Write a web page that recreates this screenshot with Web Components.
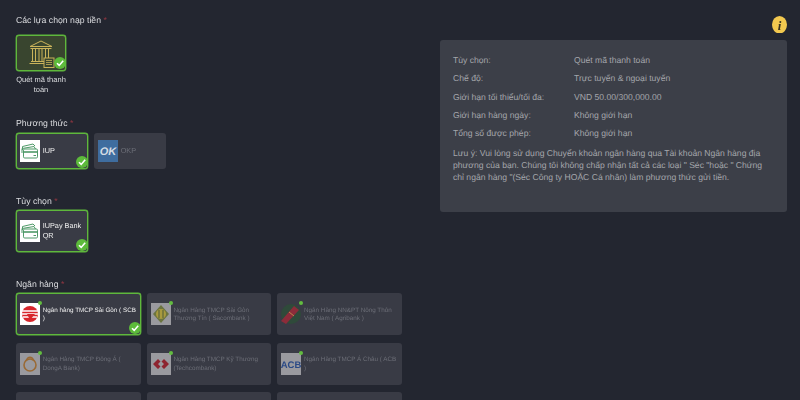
<!DOCTYPE html>
<html lang="vi">
<head>
<meta charset="utf-8">
<style>
  html, body { margin: 0; height: 100%; overflow: hidden; background: #232630; }
  body { font-family: "Liberation Sans", Arial, sans-serif; color: #d6d7da; text-rendering: geometricPrecision; }
</style>
</head>
<body>
<script>
const CHECK = `<svg class="check" viewBox="0 0 12 12" width="12" height="12"><circle cx="6" cy="6" r="6" fill="#5dbb3b"/><path d="M3 6.2 L5.2 8.4 L9.2 3.8" fill="none" stroke="#fff" stroke-width="1.6"/></svg>`;

class DepositPage extends HTMLElement {
  constructor() {
    super();
    const shadow = this.attachShadow({ mode: 'open' });
    shadow.innerHTML = `
      <style>
        :host { display: grid; grid-template-columns: 424px 347px; padding: 0 13px 0 16px; height: 400px; box-sizing: border-box; overflow: hidden; filter: blur(.25px); }
        .left { display: flex; flex-direction: column; min-width: 0; padding-top: 14px; }
        .right { display: flex; flex-direction: column; align-items: flex-end; padding-top: 15.5px; }
      </style>
      <div class="left"><slot></slot></div>
      <div class="right"><slot name="side"></slot></div>
    `;
  }
}

class FormGroup extends HTMLElement {
  connectedCallback() {
    if (this.shadowRoot) return;
    const shadow = this.attachShadow({ mode: 'open' });
    shadow.innerHTML = `
      <style>
        :host { display: block; margin-bottom: var(--after, 0); }
        .label { font-size: 8.7px; line-height: 12px; color: #dcdde0; margin-bottom: var(--label-gap, 4px); white-space: nowrap; }
        .label i { font-style: normal; color: #8f3641; }
        .items { display: flex; flex-wrap: wrap; gap: 7.3px 6px; }
      </style>
      <div class="label">${this.getAttribute('label')} <i>*</i></div>
      <div class="items"><slot></slot></div>
    `;
  }
}

class ChoiceTile extends HTMLElement {
  connectedCallback() {
    if (this.shadowRoot) return;
    const shadow = this.attachShadow({ mode: 'open' });
    const selected = this.hasAttribute('selected');
    const dot = this.hasAttribute('dot');
    shadow.innerHTML = `
      <style>
        :host { display: block; width: var(--w, 72px); }
        .tile { position: relative; box-sizing: border-box; display: flex; align-items: center; height: var(--h, 36px); padding: 0 3px; gap: 2.7px; background: #393b45; border: 1px solid transparent; border-radius: 3px; }
        :host([selected]) .tile { border-color: #5fb83c; box-shadow: 0 0 0 .4px #5fb83c; }
        .logo { position: relative; flex: none; width: 20px; height: 22px; background: #fff; display: flex; align-items: center; justify-content: center; }
        :host(:not([selected])) .logo { background: #9a9a9f; }
        :host([bare]) .logo { background: transparent; }
        .name { font-size: var(--name, 7.3px); line-height: var(--name-lh, 10px); padding-top: var(--name-top, 0); color: #f0f0f0; min-width: 0; }
        :host(:not([selected])) .name { color: #6c6e77; }
        .dot { position: absolute; right: -2px; top: -2px; width: 4px; height: 4px; border-radius: 50%; background: #62bd3f; }
        .check { position: absolute; right: -1px; bottom: 0; }
      </style>
      <div class="tile">
        <div class="logo"><slot name="logo"></slot>${dot ? '<span class="dot"></span>' : ''}</div>
        <div class="name"><slot></slot></div>
        ${selected ? CHECK : ''}
      </div>
    `;
  }
}

class CardPicture extends HTMLElement {
  constructor() {
    super();
    const shadow = this.attachShadow({ mode: 'open' });
    shadow.innerHTML = `
      <style>:host { display: block; width: 20px; height: 20px; }</style>
      <svg viewBox="0 0 20 20" width="20" height="20" fill="none" stroke="#4f9a68" stroke-width="1">
        <path d="M2.5 9 V5.5 L13 3 L15 5"/>
        <path d="M2 12 V7.5 L14 5.5 L15.5 8"/>
        <rect x="3.5" y="8" width="14" height="9" rx="1.2" fill="#fff"/>
        <path d="M3.5 11 H17.5" stroke-width="1.6"/>
        <path d="M13.5 14.5 H16"/>
      </svg>
    `;
  }
}

class ModeTile extends HTMLElement {
  constructor() {
    super();
    const shadow = this.attachShadow({ mode: 'open' });
    shadow.innerHTML = `
      <style>
        :host { display: block; width: 50px; }
        .box { position: relative; box-sizing: border-box; height: 36px; background: #39452f; border: 1px solid #5fb83c; box-shadow: 0 0 0 .4px #5fb83c; border-radius: 3px; display: flex; align-items: center; justify-content: center; }
        .check { position: absolute; right: -1px; bottom: 1px; }
        .cap { font-size: 7.5px; line-height: 9.5px; text-align: center; margin: 4px 0 0; color: #dcdde0; }
      </style>
      <div class="box"><slot name="icon"></slot>${CHECK}</div>
      <div class="cap"><slot></slot></div>
    `;
  }
}

class InfoPanel extends HTMLElement {
  constructor() {
    super();
    const shadow = this.attachShadow({ mode: 'open' });
    shadow.innerHTML = `
      <style>
        :host { display: block; width: 347px; height: 172px; box-sizing: border-box; margin-top: 7px; padding: 11px 12px 0 13px; background: #3c3f48; border-radius: 3px; font-size: 8.6px; color: #a4a6ab; }
        .rows { display: grid; grid-template-columns: 121px 1fr; grid-auto-rows: 18.3px; align-items: center; }
        .note { margin-top: 6px; line-height: 11.6px; }
      </style>
      <div class="rows"><slot name="rows"></slot></div>
      <div class="note"><slot></slot></div>
    `;
  }
}

customElements.define('deposit-page', DepositPage);
customElements.define('form-group', FormGroup);
customElements.define('choice-tile', ChoiceTile);
customElements.define('card-picture', CardPicture);
customElements.define('mode-tile', ModeTile);
customElements.define('info-panel', InfoPanel);
</script>

<deposit-page>
  <form-group label="Các lựa chọn nạp tiền" style="--after:23px;--label-gap:9px">
    <mode-tile>
      <svg slot="icon" viewBox="0 0 26 28" width="26" height="28" fill="none" stroke="#c9b25a" stroke-width="1" style="margin:1px 0 0 2px">
        <path d="M1 6.5 L12 1 L23 6.5 Z"/>
        <path d="M1.5 8.5 H22.5"/>
        <path d="M3.5 9 V21 M6.5 9 V21 M10 9 V21 M13 9 V21 M16.5 9 V19 M19.5 9 V19"/>
        <path d="M2 21.5 H15 M0.5 23.5 H15"/>
        <rect x="15" y="18" width="10" height="9.5" fill="#39452f"/>
        <path d="M17 20.5 H23 M17 22.5 H23 M17 24.5 H23" stroke-width=".8"/>
      </svg>
      Quét mã thanh toán
    </mode-tile>
  </form-group>

  <form-group label="Phương thức" style="--after:26px">
    <choice-tile selected><card-picture slot="logo"></card-picture>IUP</choice-tile>
    <choice-tile bare>
      <svg slot="logo" viewBox="0 0 20 22" width="20" height="22"><rect width="20" height="22" fill="#3f6d9f"/><text x="10" y="15" font-family="Liberation Sans" font-size="11" font-weight="700" font-style="italic" text-anchor="middle" fill="#d5dce4">OK</text></svg>
      OKP
    </choice-tile>
  </form-group>

  <form-group label="Tùy chọn" style="--after:25.7px;--h:42.3px;--label-gap:3px">
    <choice-tile selected><card-picture slot="logo"></card-picture>IUPay Bank QR</choice-tile>
  </form-group>

  <form-group label="Ngân hàng" style="--w:124.7px;--h:42.3px;--label-gap:3px;--name:6.3px;--name-lh:8.6px;--name-top:2px">
    <choice-tile selected dot>
      <svg slot="logo" viewBox="0 0 20 22" width="20" height="22">
        <circle cx="10" cy="11" r="8" fill="#d8262c"/>
        <path d="M2 8 H18 M2 11 H18 M3 14 H17" stroke="#fff" stroke-width="1.3"/>
        <path d="M7 11 H15 L10 17 Z" fill="#d8262c"/>
      </svg>
      Ngân hàng TMCP Sài Gòn ( SCB )
    </choice-tile>
    <choice-tile dot>
      <svg slot="logo" viewBox="0 0 20 22" width="20" height="22">
        <path d="M10 2 L18 11 L10 20 L2 11 Z" fill="#6b7440"/>
        <circle cx="10" cy="11" r="5" fill="#a89a3e"/>
        <path d="M8 7 V15 M12 7 V15" stroke="#4d5a38"/>
      </svg>
      Ngân Hàng TMCP Sài Gòn Thương Tín ( Sacombank )
    </choice-tile>
    <choice-tile dot bare>
      <svg slot="logo" viewBox="0 0 20 22" width="20" height="22">
        <circle cx="10" cy="11" r="10" fill="#2f4a3a"/>
        <path d="M0 18 L13 3 L18 7 L5 21 Z" fill="#8c2c3a"/>
        <path d="M8 9 L13 13" stroke="#c79a50" stroke-width=".8"/>
      </svg>
      Ngân Hàng NN&amp;PT Nông Thôn Việt Nam ( Agribank )
    </choice-tile>
    <choice-tile dot>
      <svg slot="logo" viewBox="0 0 20 22" width="20" height="22" fill="none" stroke="#9a6a35" stroke-width="1.6">
        <circle cx="10" cy="12" r="6"/>
        <path d="M6 8 C8 3 12 3 14 8"/>
      </svg>
      Ngân Hàng TMCP Đông Á ( DongA Bank)
    </choice-tile>
    <choice-tile dot>
      <svg slot="logo" viewBox="0 0 20 22" width="20" height="22" fill="#8e2430">
        <path d="M2 11 L7 6 L9.5 8.5 L7 11 L9.5 13.5 L7 16 Z"/>
        <path d="M18 11 L13 6 L10.5 8.5 L13 11 L10.5 13.5 L13 16 Z"/>
      </svg>
      Ngân Hàng TMCP Kỹ Thương (Techcombank)
    </choice-tile>
    <choice-tile dot>
      <svg slot="logo" viewBox="0 0 20 22" width="20" height="22"><text x="10" y="15" font-family="Liberation Sans" font-size="9.5" font-weight="700" text-anchor="middle" fill="#2b4a86">ACB</text></svg>
      Ngân Hàng TMCP Á Châu ( ACB )
    </choice-tile>
    <choice-tile></choice-tile>
    <choice-tile></choice-tile>
    <choice-tile></choice-tile>
  </form-group>

  <svg slot="side" viewBox="0 0 15 17.5" width="15" height="17.5">
    <ellipse cx="7.5" cy="8.75" rx="7.5" ry="8.75" fill="#f2c84f"/>
    <text x="7.5" y="13.5" font-family="Liberation Serif" font-size="13" font-weight="700" font-style="italic" text-anchor="middle" fill="#3a3320">i</text>
  </svg>
  <info-panel slot="side">
    <span slot="rows">Tùy chọn:</span><span slot="rows">Quét mã thanh toán</span>
    <span slot="rows">Chế độ:</span><span slot="rows">Trực tuyến &amp; ngoại tuyến</span>
    <span slot="rows">Giới hạn tối thiểu/tối đa:</span><span slot="rows">VND 50.00/300,000.00</span>
    <span slot="rows">Giới hạn hàng ngày:</span><span slot="rows">Không giới hạn</span>
    <span slot="rows">Tổng số được phép:</span><span slot="rows">Không giới hạn</span>
    Lưu ý: Vui lòng sử dụng Chuyển khoản ngân hàng qua Tài khoản Ngân hàng địa phương của bạn. Chúng tôi không chấp nhận tất cả các loại " Séc "hoặc " Chứng chỉ ngân hàng "(Séc Công ty HOẶC Cá nhân) làm phương thức gửi tiền.
  </info-panel>
</deposit-page>
</body>
</html>
